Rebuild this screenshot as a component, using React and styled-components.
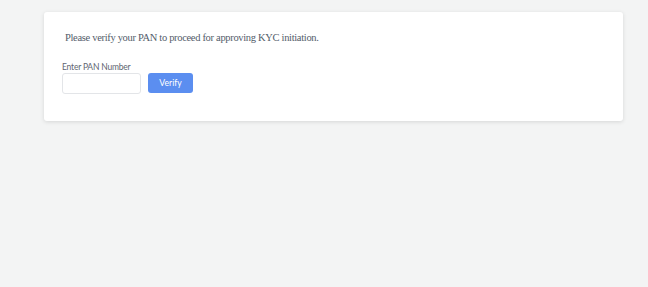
import styled, { createGlobalStyle } from "styled-components";

const GlobalStyle = createGlobalStyle`
  html, body {
    margin: 0;
    padding: 0;
    background: #f3f4f4;
  }
  body {
    font-family: Lato, "Open Sans", sans-serif;
  }
`;

const Page = styled.div`
  width: 648px;
  height: 287px;
  padding: 12px 25px 0 44px;
  box-sizing: border-box;
  background: #f3f4f4;
`;

const Card = styled.div`
  background: #fff;
  border-radius: 3px;
  box-shadow: 0 1px 4px rgba(0, 0, 0, 0.12);
  height: 109px;
  box-sizing: border-box;
  padding: 19px 18px 0 18px;
`;

const Heading = styled.p`
  margin: 0 0 0 3px;
  font-family: "Liberation Serif", "Times New Roman", serif;
  font-size: 10.5px;
  letter-spacing: -0.32px;
  line-height: 14px;
  color: #535c6a;
`;

const Label = styled.label`
  display: block;
  margin-top: 16px;
  font-size: 8.5px;
  letter-spacing: -0.2px;
  line-height: 12px;
  color: #5f6672;
`;

const Row = styled.div`
  display: flex;
  align-items: flex-start;
  gap: 7px;
  margin-top: 0;
`;

const Input = styled.input`
  width: 79px;
  height: 21px;
  box-sizing: border-box;
  border: 1px solid #e3e5e8;
  border-radius: 3px;
  outline: none;
  padding: 0 6px;
`;

const Button = styled.button`
  width: 45px;
  height: 20px;
  border: none;
  border-radius: 3px;
  background: #5b8ef0;
  color: #fff;
  font-family: Lato, "Open Sans", sans-serif;
  font-size: 8.6px;
  padding: 0;
  cursor: pointer;
`;

export default function App() {
  return (
    <>
      <GlobalStyle />
      <Page>
        <Card>
          <Heading>Please verify your PAN to proceed for approving KYC initiation.</Heading>
          <Label>Enter PAN Number</Label>
          <Row>
            <Input />
            <Button>Verify</Button>
          </Row>
        </Card>
      </Page>
    </>
  );
}
